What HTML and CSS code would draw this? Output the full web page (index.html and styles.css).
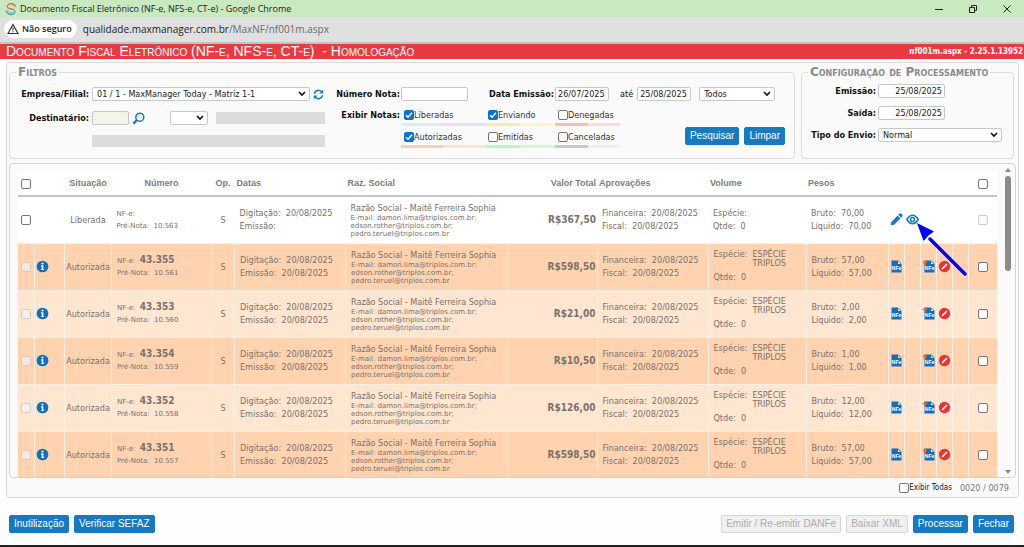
FILE: index.html
```html
<!DOCTYPE html>
<html lang="pt-BR">
<head>
	<meta charset="utf-8">
	<title>Documento Fiscal Eletrônico (NF-e, NFS-e, CT-e)</title>
	<link rel="stylesheet" href="styles.css">
	<script src="notas.js" defer></script>
</head>
<body>
	<svg class="sprite" aria-hidden="true">
		<symbol id="ico-info" viewBox="0 0 12 12">
			<circle cx="6" cy="6" r="5.4" fill="#0f6fc0"/>
			<circle cx="6" cy="3.2" r="1" fill="#fff"/>
			<path d="M4.6 4.9h2.2v3.4h.7v1H4.6v-1h.7V5.9h-.7z" fill="#fff"/>
		</symbol>
		<symbol id="ico-nfe" viewBox="0 0 13 13">
			<path d="M1.500.5h6.700L11.500 3.800v8.700h-10z" fill="#0f6fc0"/>
			<path d="M8 1.200v2.800h2.800z" fill="#fff"/>
			<text x="6.500" y="10" text-anchor="middle" class="ico-text">NFe</text>
		</symbol>
		<symbol id="ico-envia" viewBox="0 0 13 13">
			<path d="M2.500.5h6.700L12.500 3.800v8.700h-10z" fill="#0f6fc0"/>
			<path d="M9 1.200v2.800h2.800z" fill="#fff"/>
			<path d="M2.900.2l2.800 2.900H3.900v2.500H1.900V3.100H.1z" fill="#f26a1b"/>
			<text x="7.500" y="10" text-anchor="middle" class="ico-text">NFe</text>
		</symbol>
		<symbol id="ico-cancela" viewBox="0 0 12 12">
			<circle cx="6" cy="6" r="5.200" fill="#ea3338"/>
			<path d="M3.7 8.3l4.6-4.6" stroke="#fff" stroke-width="1.5" fill="none"/>
		</symbol>
		<symbol id="ico-edita" viewBox="0 0 12 12">
			<path d="M.6 11.4l.7-3.200L7 2.300l2.700 2.700-5.900 5.900zM7.700 1.700L9 .5q.7-.5 1.300 0l1.200 1.200q.5.6 0 1.300l-1.200 1.300z" fill="#1b7ac2"/>
		</symbol>
		<symbol id="ico-olho" viewBox="0 0 12 10">
			<path d="M.8 5Q3 1.100 6 1.100T11.200 5Q9 8.900 6 8.900T.8 5z" fill="none" stroke="#1b7ac2" stroke-width="1.500"/>
			<circle cx="6" cy="5" r="1.800" fill="none" stroke="#1b7ac2" stroke-width="1.400"/>
		</symbol>
	</svg>

	<header class="janela">
		<svg class="logo" viewBox="0 0 12 14">
			<path d="M10.500 4.500C9.500 1 4 .5 2.600 3.500 1.500 6.500 5 6.300 6.500 7.200" fill="none" stroke="#e8604c" stroke-width="1.200"/>
			<path d="M4 3.600C6 1.800 9 3 9.600 5.200" fill="none" stroke="#f0a070" stroke-width="1"/>
			<path d="M1.200 8.500C2 13 8 14 9.800 10.500 10.500 8 8 7.200 6.200 6.800" fill="none" stroke="#3ea79b" stroke-width="1.200"/>
			<path d="M2.800 8.500C3.600 11.500 6.800 12 8.200 10" fill="none" stroke="#6a9bb8" stroke-width="1"/>
		</svg>
		<span class="janela-titulo">Documento Fiscal Eletrônico (NF-e, NFS-e, CT-e) - Google Chrome</span>
		<button class="jbtn" aria-label="Minimizar"><svg viewBox="0 0 10 10"><path d="M1 5.500h8"/></svg></button>
		<button class="jbtn" aria-label="Restaurar"><svg viewBox="0 0 10 10"><path d="M1.500 3.500h5v5h-5zM3.500 3V1.500h5v5H7"/></svg></button>
		<button class="jbtn" aria-label="Fechar janela"><svg viewBox="0 0 10 10"><path d="M1.500 1.500l7 7M8.500 1.500l-7 7"/></svg></button>
	</header>
	<div class="endereco">
		<span class="seguro">
			<svg viewBox="0 0 12 12"><path d="M6 1.500L11 10.500H1z" fill="none" stroke="#333" stroke-width="1.200"/><path d="M6 4.600v3M6 8.300v1" stroke="#333" stroke-width="1.100"/></svg>
			Não seguro
		</span>
		<span class="url">qualidade.maxmanager.com.br<span>/MaxNF/nf001m.aspx</span></span>
	</div>

	<div class="titulo">
		<h1>Documento Fiscal Eletrônico (NF-e, NFS-e, CT-e) &nbsp;- Homologação</h1>
		<span>nf001m.aspx - 2.25.1.13952</span>
	</div>

	<main class="painel">
		<div class="topo">
			<fieldset class="filtros">
				<legend>Filtros</legend>
				<div class="col-empresa">
					<label for="empresa">Empresa/Filial:</label>
					<div class="linha">
						<select id="empresa"><option>01 / 1 - MaxManager Today - Matriz 1-1</option></select>
						<svg class="ico-atualiza" viewBox="0 0 12 12"><path d="M1.500 5.200A4.500 4.500 0 0 1 9.500 3.200M10.500 6.800A4.500 4.500 0 0 1 2.500 8.800" fill="none" stroke="#1b7ac2" stroke-width="1.600"/><path d="M11.200.8v4.200H7zM.8 11.200V7H5z" fill="#1b7ac2"/></svg>
					</div>
					<label for="destinatario">Destinatário:</label>
					<div class="linha">
						<input id="destinatario" class="cod" type="text">
						<svg class="ico-busca" viewBox="0 0 12 12"><circle cx="7.200" cy="4.800" r="3.700" fill="none" stroke="#1b7ac2" stroke-width="1.400"/><path d="M5.200 4.600A2.200 2.200 0 0 1 7 2.800" fill="none" stroke="#7db5e0" stroke-width=".8"/><path d="M4.500 7.500L1.300 10.800" stroke="#1b7ac2" stroke-width="2.200"/></svg>
						<select class="uf" aria-label="UF"><option></option></select>
						<input class="bloq" type="text" disabled aria-label="CNPJ">
					</div>
					<input class="bloq nome" type="text" disabled aria-label="Nome do destinatário">
				</div>
				<div class="col-nota">
					<div class="linha datas">
						<label for="numero" class="rot">Número Nota:</label>
						<input id="numero" type="text">
						<label for="de" class="rot-data">Data Emissão:</label>
						<input id="de" class="data" type="text" value="26/07/2025">
						<label for="ate" class="fino">até</label>
						<input id="ate" class="data" type="text" value="25/08/2025">
						<select class="todos" aria-label="Período"><option>Todos</option></select>
					</div>
					<div class="linha exibir">
						<span class="rot">Exibir Notas:</span>
						<div class="status">
							<label class="azul"><input type="checkbox" checked>Liberadas</label>
							<label class="amarelo"><input type="checkbox" checked>Enviando</label>
							<label class="rosa"><input type="checkbox">Denegadas</label>
							<label class="laranja"><input type="checkbox" checked>Autorizadas</label>
							<label class="verde"><input type="checkbox">Emitidas</label>
							<label class="cinza"><input type="checkbox">Canceladas</label>
						</div>
						<div class="acoes">
							<button class="btn">Pesquisar</button>
							<button class="btn">Limpar</button>
						</div>
					</div>
				</div>
			</fieldset>
			<fieldset class="config">
				<legend>Configuração de Processamento</legend>
				<label for="emissao">Emissão:</label>
				<input id="emissao" type="text" value="25/08/2025">
				<label for="saida">Saída:</label>
				<input id="saida" type="text" value="25/08/2025">
				<label for="envio">Tipo do Envio:</label>
				<select id="envio"><option>Normal</option></select>
			</fieldset>
		</div>

		<div class="grade">
			<div class="grade-corpo">
				<table>
					<colgroup>
						<col class="c-sel"><col class="c-info"><col class="c-sit"><col class="c-num"><col class="c-op"><col class="c-dat"><col class="c-raz"><col class="c-val"><col class="c-apr"><col class="c-vol"><col class="c-pes"><col class="c-ico"><col class="c-ico"><col class="c-ico"><col class="c-ico"><col class="c-ico"><col class="c-fim">
					</colgroup>
					<thead>
						<tr>
							<th><input type="checkbox" aria-label="Selecionar todas"></th>
							<th></th>
							<th>Situação</th>
							<th>Número</th>
							<th>Op.</th>
							<th class="esq">Datas</th>
							<th class="esq">Raz. Social</th>
							<th class="dir">Valor Total</th>
							<th class="esq">Aprovações</th>
							<th class="esq">Volume</th>
							<th class="esq">Pesos</th>
							<th></th><th></th><th></th><th></th><th></th>
							<th><input type="checkbox" aria-label="Processar todas"></th>
						</tr>
					</thead>
					<tbody id="notas"></tbody>
				</table>
			</div>
			<div class="rolagem"><i class="cima"></i><i class="barra"></i><i class="baixo"></i></div>
		</div>
		<div class="contagem">
			<label><input type="checkbox">Exibir Todas</label>
			<span>0020 / 0079</span>
		</div>
		<svg class="seta" viewBox="0 0 54 56"><path d="M14 16L49 51" stroke="#0000fe" stroke-width="3.500" stroke-linecap="round"/><path d="M1 0L18 8.500 12.500 12.500 7.500 18z" fill="#0000fe"/></svg>
	</main>

	<footer class="rodape">
		<button class="btn">Inutilização</button>
		<button class="btn">Verificar SEFAZ</button>
		<span class="vao"></span>
		<button class="btn" disabled>Emitir / Re-emitir DANFe</button>
		<button class="btn" disabled>Baixar XML</button>
		<button class="btn">Processar</button>
		<button class="btn">Fechar</button>
	</footer>
	<div class="tarefas"></div>
</body>
</html>
```

FILE: notas.js
```js
var notas = [
	{ nfe: '', pre: '10.563', valor: '367,50', peso: '70,00' },
	{ nfe: '43.355', pre: '10.561', valor: '598,50', peso: '57,00' },
	{ nfe: '43.353', pre: '10.560', valor: '21,00', peso: '2,00' },
	{ nfe: '43.354', pre: '10.559', valor: '10,50', peso: '1,00' },
	{ nfe: '43.352', pre: '10.558', valor: '126,00', peso: '12,00' },
	{ nfe: '43.351', pre: '10.557', valor: '598,50', peso: '57,00' }
];

function icone(nome) {
	return '<svg class="ico"><use href="#ico-' + nome + '"/></svg>';
}

function linha(n) {
	var aut = n.nfe !== '';
	var h = '<tr class="' + (aut ? 'autorizada' : 'liberada') + '">';
	h += '<td class="meio"><input type="checkbox" aria-label="Selecionar ' + n.pre + '"' + (aut ? ' disabled' : '') + '></td>';
	h += '<td class="info">' + (aut ? icone('info') : '') + '</td>';
	h += '<td class="meio">' + (aut ? 'Autorizada' : 'Liberada') + '</td>';
	h += '<td class="num"><div>NF-e: <b>' + n.nfe + '</b></div><div>Pré-Nota: &nbsp;' + n.pre + '</div></td>';
	h += '<td class="meio">S</td>';
	h += '<td class="par"><div>Digitação: &nbsp;20/08/2025</div><div>Emissão: ' + (aut ? '&nbsp;20/08/2025' : '') + '</div></td>';
	h += '<td class="raz"><div>Razão Social - Maitê Ferreira Sophia</div><small>E-mail: damon.lima@triplos.com.br;<br>edson.rother@triplos.com.br;<br>pedro.teruel@triplos.com.br</small></td>';
	h += '<td class="valor">R$' + n.valor + '</td>';
	h += '<td class="par"><div>Financeira: &nbsp;20/08/2025</div><div>Fiscal: &nbsp;20/08/2025</div></td>';
	if (aut) {
		h += '<td class="vol"><div class="especie"><span>Espécie:</span><span>ESPÉCIE<br>TRIPLOS</span></div><div>Qtde: &nbsp;0</div></td>';
	} else {
		h += '<td class="par"><div>Espécie:</div><div>Qtde: &nbsp;0</div></td>';
	}
	h += '<td class="par"><div>Bruto: &nbsp;' + n.peso + '</div><div>Líquido: &nbsp;' + n.peso + '</div></td>';
	var icos = aut ? ['nfe', '', 'envia', 'cancela', ''] : ['edita', 'olho', '', '', ''];
	for (var i = 0; i < icos.length; i++) {
		h += '<td class="meio">' + (icos[i] ? icone(icos[i]) : '') + '</td>';
	}
	h += '<td class="meio"><input type="checkbox" aria-label="Processar ' + n.pre + '"' + (aut ? '' : ' disabled') + '></td>';
	return h + '</tr>';
}

document.getElementById('notas').innerHTML = notas.map(linha).join('');
```

FILE: styles.css
```css
* {
	box-sizing: border-box;
}
body {
	margin: 0;
	height: 100vh;
	display: flex;
	flex-direction: column;
	overflow: hidden;
	background: #fdfdfd;
	color: #222;
	font: 9px/12px "DejaVu Sans Condensed", "DejaVu Sans", sans-serif;
}
.sprite {
	display: none;
}
input, select, button {
	font: inherit;
	color: inherit;
	margin: 0;
}
input[type=text], select {
	height: 14px;
	border: 1px solid #c8c8c8;
	border-radius: 2px;
	background: #fff;
	padding: 0 2px;
	min-width: 0;
}
select {
	appearance: none;
	padding: 0 12px 0 4px;
	background: #fff url("data:image/svg+xml,%3Csvg xmlns='http://www.w3.org/2000/svg' viewBox='0 0 8 6'%3E%3Cpath d='M1 1l3 3 3-3' fill='none' stroke='%23111' stroke-width='1.600'/%3E%3C/svg%3E") no-repeat right 3px center / 8px 6px;
}
input[type=checkbox] {
	appearance: none;
	flex: none;
	width: 10px;
	height: 10px;
	border: 1px solid #767676;
	border-radius: 2px;
	background: #fff;
	vertical-align: middle;
}
input[type=checkbox]:checked {
	border-color: #0b72cf;
	background: #0b72cf url("data:image/svg+xml,%3Csvg xmlns='http://www.w3.org/2000/svg' viewBox='0 0 8 8'%3E%3Cpath d='M1 4.200l2 2L7 1.800' fill='none' stroke='%23fff' stroke-width='1.500'/%3E%3C/svg%3E") center / 8px 8px;
}
input[type=checkbox]:disabled {
	border-color: #d2cdc9;
	background: rgba(245,245,245,.6);
}

/* janela do navegador */
.janela {
	height: 17px;
	flex: none;
	display: flex;
	align-items: center;
	padding-left: 5px;
	background: #c9e9c1;
	font: 9px/17px "Open Sans", sans-serif;
}
.logo {
	width: 12px;
	height: 14px;
	margin-right: 3px;
}
.janela-titulo {
	flex: 1;
}
.jbtn {
	width: 34px;
	height: 17px;
	padding: 0;
	border: 0;
	background: none;
}
.jbtn svg {
	display: block;
	width: 10px;
	height: 10px;
	margin: auto;
	fill: none;
	stroke: #222;
}
.endereco {
	height: 27px;
	flex: none;
	display: flex;
	align-items: center;
	gap: 6px;
	padding: 0 4px 1px;
	background: #e0e0e0;
	border-bottom: 2px solid #c0c4c4;
	font: 10px/18px "Open Sans", sans-serif;
}
.seguro {
	display: flex;
	align-items: center;
	gap: 3px;
	height: 18px;
	padding: 0 5px 0 3px;
	border-radius: 9px;
	background: #fff;
	font-size: 9px;
	font-weight: 600;
}
.seguro svg {
	width: 12px;
	height: 12px;
}
.url span {
	color: #6b6b6b;
}
.titulo {
	height: 15px;
	flex: none;
	display: flex;
	align-items: center;
	justify-content: space-between;
	padding: 0 1px 0 6px;
	background: #e73b41;
	color: #fff;
	font-size: 8px;
	font-weight: bold;
}
.titulo h1 {
	margin: 0;
	font: 14px/15px "Liberation Sans", sans-serif;
	font-variant: small-caps;
}

/* filtros */
.painel {
	position: relative;
	flex: 1;
	min-height: 0;
	display: flex;
	flex-direction: column;
	margin: 3px 5px 0 6px;
	padding: 3px 2px 0;
	border: 1px solid #d9d9d9;
	border-radius: 4px;
	background: #fafafa;
}
.topo {
	display: flex;
	gap: 6px;
	padding-right: 2px;
}
fieldset {
	min-width: 0;
	height: 93px;
	margin: 0;
	padding: 0;
	border: 1px solid #dcdcdc;
	border-radius: 4px;
}
legend {
	margin-left: 6px;
	padding: 0 2px;
	color: #8a8a8a;
	font: bold 12px/12px "DejaVu Sans", sans-serif;
	font-variant: small-caps;
}
.filtros label, .filtros .rot, .config label {
	font-weight: bold;
	color: #111;
	text-align: right;
}
.linha {
	display: flex;
	align-items: center;
}
.filtros {
	flex: 1;
	display: flex;
	gap: 11px;
}
.col-empresa {
	display: grid;
	grid-template-columns: 79px 233px;
	grid-template-rows: 14px 14px 12px;
	gap: 10px 3px;
	align-content: start;
	align-items: center;
	padding-top: 9px;
}
#empresa {
	width: 218px;
}
.ico-atualiza {
	width: 11px;
	height: 11px;
	margin-left: 3px;
}
.cod {
	width: 37px;
}
input.cod {
	background: #f3f5ea;
}
.ico-busca {
	width: 13px;
	height: 13px;
	margin: 0 25px 0 3px;
}
.uf {
	width: 38px;
}
input.bloq {
	height: 12px;
	border: 0;
	border-radius: 0;
	background: #dcdcdc;
}
.uf + .bloq {
	width: 109px;
	margin-left: 8px;
}
.nome {
	grid-column: 2;
	width: 233px;
}
.col-nota {
	flex: 1;
	padding: 9px 9px 0 0;
}
.filtros .rot {
	width: 64px;
	margin-right: 1px;
}
#numero {
	width: 67px;
}
.rot-data {
	margin: 0 1px 0 21px;
}
.data {
	width: 54px;
}
.filtros .fino {
	margin: 0 4px 0 11px;
	font-weight: normal;
}
.todos {
	width: 76px;
	margin-left: 8px;
}
.exibir {
	align-items: flex-start;
	margin-top: 8px;
}
.status {
	display: grid;
	grid-template-columns: 84px 70px 65px;
	row-gap: 5px;
}
.filtros .status label {
	display: flex;
	align-items: center;
	height: 17px;
	padding: 0 0 5px 3px;
	font-weight: normal;
	color: #333;
	background: linear-gradient(90deg, var(--forte) 50%, var(--claro) 50%) bottom / 100% 3px no-repeat;
}
.azul {
	--forte: #d8edf7;
	--claro: #e8e0f2;
}
.amarelo {
	--forte: #fae9b0;
	--claro: #fbf5cc;
}
.rosa {
	--forte: #f8bcbc;
	--claro: #fbdcd8;
}
.laranja {
	--forte: #ffcfa8;
	--claro: #ffe3cc;
}
.verde {
	--forte: #b4fcb4;
	--claro: #d4f8d4;
}
.cinza {
	--forte: #c8c8c8;
	--claro: #efefef;
}
.acoes {
	display: flex;
	gap: 5px;
	margin: 18px 0 0 auto;
}
.btn {
	height: 18px;
	padding: 0 4px;
	border: 1px solid #1779c0;
	border-radius: 2px;
	background: #1779c0;
	color: #fff;
	font: 10px/14px "Liberation Sans", sans-serif;
}
.btn:disabled {
	border-color: #d6d6d6;
	background: #f0f0f0;
	color: #acacac;
}
.config {
	width: 213px;
	display: grid;
	grid-template-columns: 74px 124px;
	grid-auto-rows: 14px;
	gap: 8px 2px;
	align-content: start;
	align-items: center;
	padding-top: 6px;
}
.config input {
	width: 67px;
	text-align: right;
}

/* grade de notas */
.grade {
	flex: 1;
	min-height: 0;
	display: flex;
	margin-top: 4px;
	border: 1px solid #d4d4d4;
	border-radius: 4px;
	padding: 7px 3px 0 7px;
	overflow: hidden;
}
.grade-corpo {
	flex: 1;
	overflow: hidden;
}
table {
	width: 100%;
	table-layout: fixed;
	border-collapse: collapse;
	background: #fff;
	color: #7a706a;
}
.c-sel { width: 17px; }
.c-info { width: 30px; }
.c-sit { width: 47px; }
.c-num { width: 100px; }
.c-op { width: 23px; }
.c-dat { width: 111px; }
.c-val { width: 90px; }
.c-apr { width: 111px; }
.c-vol { width: 98px; }
.c-pes { width: 82px; }
.c-ico { width: 16px; }
.c-fim { width: 29px; }
th {
	height: 25px;
	padding: 0;
	border-bottom: 2px solid #c6c6c6;
	color: #7d7d7d;
	font: bold 9px/12px "Liberation Sans", sans-serif;
}
.esq {
	text-align: left;
	padding-left: 2px;
}
.dir {
	text-align: right;
	padding-right: 1px;
}
td {
	height: 47px;
	padding: 0 0 0 2px;
}
td.meio {
	padding: 0;
	text-align: center;
}
td.info {
	padding-left: 1px;
}
.autorizada td {
	border-left: 1px solid #fff0e2;
	border-top: 1px solid #fff0e2;
	background: #ffe6d0;
}
.autorizada:nth-child(even) td {
	background: #ffd3b0;
}
.num, .raz small {
	font-size: 7px;
	font-family: "DejaVu Sans", sans-serif;
}
td.num, td.par, td.raz, td.vol {
	padding-left: 5px;
}
.num b {
	margin-left: 2px;
	font: bold 10px/12px "DejaVu Sans Condensed", "DejaVu Sans", sans-serif;
}
.par div {
	line-height: 13px;
}
.raz small {
	display: block;
	line-height: 8px;
}
td.valor {
	padding-right: 1px;
	text-align: right;
	font-size: 10px;
	font-weight: bold;
}
.especie {
	display: flex;
	gap: 5px;
	line-height: 9px;
	margin-bottom: 3px;
}
.ico {
	display: block;
	width: 13px;
	height: 13px;
	margin: 0 auto;
}
.info .ico {
	margin: 0;
}
.ico-text {
	fill: #fff;
	font: bold 5px "Liberation Sans", sans-serif;
}
.rolagem {
	width: 8px;
	margin: -3px 0 3px 7px;
	display: flex;
	flex-direction: column;
	align-items: center;
}
.barra {
	width: 6px;
	height: 95px;
	margin-top: 4px;
	border-radius: 3px;
	background: #8a8a8a;
}
.cima, .baixo {
	border: 3px solid transparent;
	border-top-width: 0;
	border-bottom: 4px solid #8a8a8a;
}
.baixo {
	margin-top: auto;
	border-top: 4px solid #8a8a8a;
	border-bottom-width: 0;
}
.contagem {
	height: 19px;
	flex: none;
	display: flex;
	align-items: center;
	justify-content: flex-end;
	gap: 8px;
	padding-right: 7px;
	color: #777;
}
.contagem label {
	display: flex;
	align-items: center;
	font-size: 8px;
	color: #222;
}
/* aponta para o botão de visualizar */
.seta {
	position: absolute;
	right: 48px;
	top: 160px;
	width: 54px;
	height: 56px;
}
.rodape {
	flex: none;
	display: flex;
	gap: 5px;
	padding: 17px 10px 12px 9px;
}
.vao {
	flex: 1;
}
.tarefas {
	height: 2px;
	flex: none;
	background: #222;
}
```
